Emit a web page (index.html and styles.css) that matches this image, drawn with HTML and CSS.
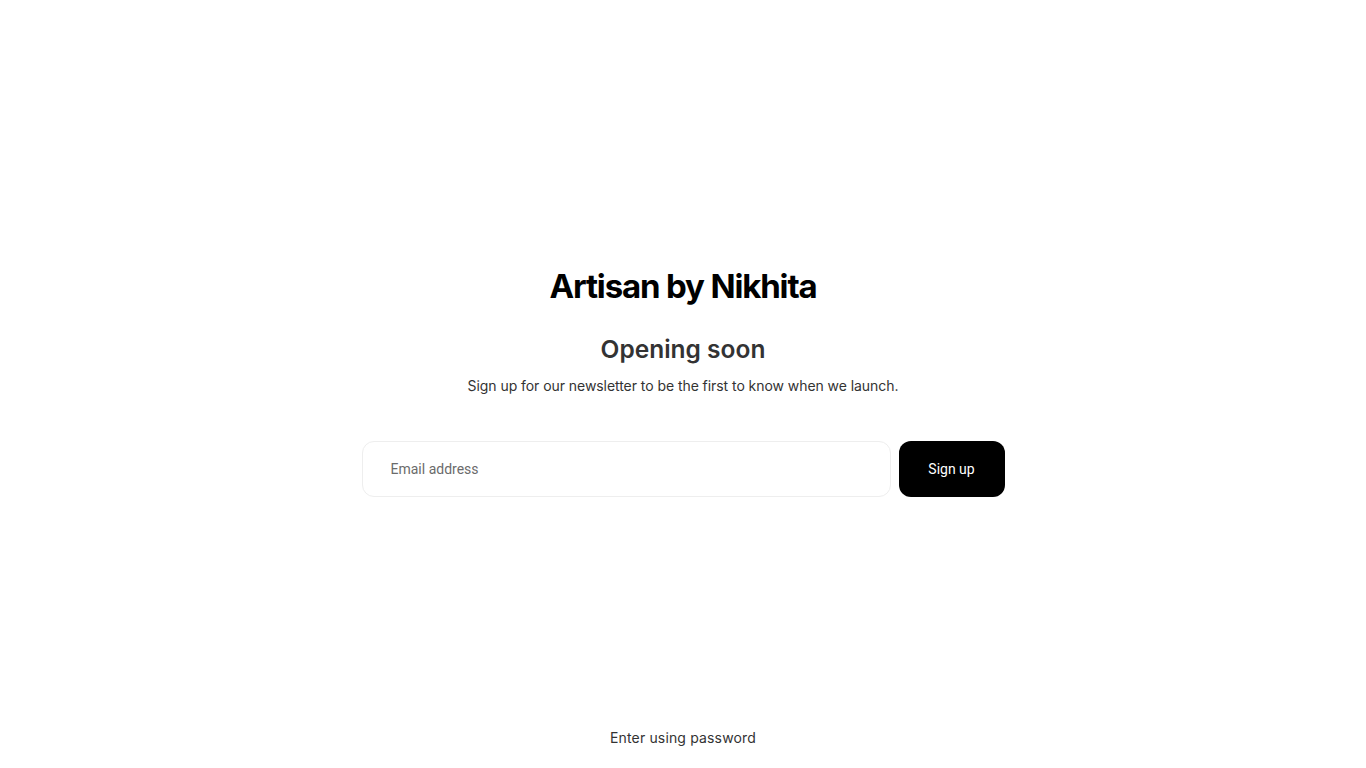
FILE: index.html
```html
<!DOCTYPE html>
<html lang="en">
<head>
<meta charset="utf-8">
<title>Artisan by Nikhita</title>
<link rel="stylesheet" href="styles.css">
</head>
<body>
<div class="page">
  <main class="main">
    <h1 class="brand">Artisan by Nikhita</h1>
    <h2 class="heading">Opening soon</h2>
    <p class="lead">Sign up for our newsletter to be the first to know when we launch.</p>
    <form class="signup">
      <input class="email" type="email" placeholder="Email address">
      <button class="submit" type="button">Sign up</button>
    </form>
  </main>
  <footer class="footer">
    <a class="password-link" href="#">Enter using password</a>
  </footer>
</div>
</body>
</html>
```

FILE: styles.css
```css
* { box-sizing: border-box; }
html, body { margin: 0; padding: 0; }
body {
  font-family: Inter, "Noto Sans", sans-serif;
  color: #333;
  background: #fff;
}
.page {
  min-height: 100vh;
  display: flex;
  flex-direction: column;
}
.main {
  flex: 1;
  display: flex;
  flex-direction: column;
  align-items: center;
  justify-content: center;
  padding-top: 36px;
}
.brand {
  margin: 0;
  font-size: 33px;
  font-weight: 700;
  letter-spacing: -0.035em;
  color: #000;
  line-height: 1.2;
}
.heading {
  margin: 28px 0 0;
  font-size: 24.5px;
  font-weight: 600;
  color: #333;
  line-height: 1.3;
}
.lead {
  margin: 9px 0 0;
  font-size: 14px;
  letter-spacing: -0.06px;
  line-height: 1.5;
  color: #333;
}
.signup {
  margin-top: 45px;
  display: flex;
  gap: 8px;
}
.email {
  width: 529px;
  height: 56px;
  border: 1px solid #eeeeee;
  border-radius: 12px;
  padding: 0 28px;
  font-family: Roboto, sans-serif;
  font-size: 14px;
  color: #333;
  outline: none;
}
.email::placeholder { color: #6b6b6b; }
.submit {
  width: 106px;
  height: 56px;
  border: 0;
  border-radius: 12px;
  background: #000;
  color: #fff;
  font-family: Roboto, sans-serif;
  font-size: 14px;
  cursor: pointer;
}
.footer {
  display: flex;
  justify-content: center;
  padding: 0 0 20px;
}
.password-link {
  font-size: 14px;
  letter-spacing: 0.15px;
  color: #333;
  text-decoration: none;
  line-height: 20px;
}
```
